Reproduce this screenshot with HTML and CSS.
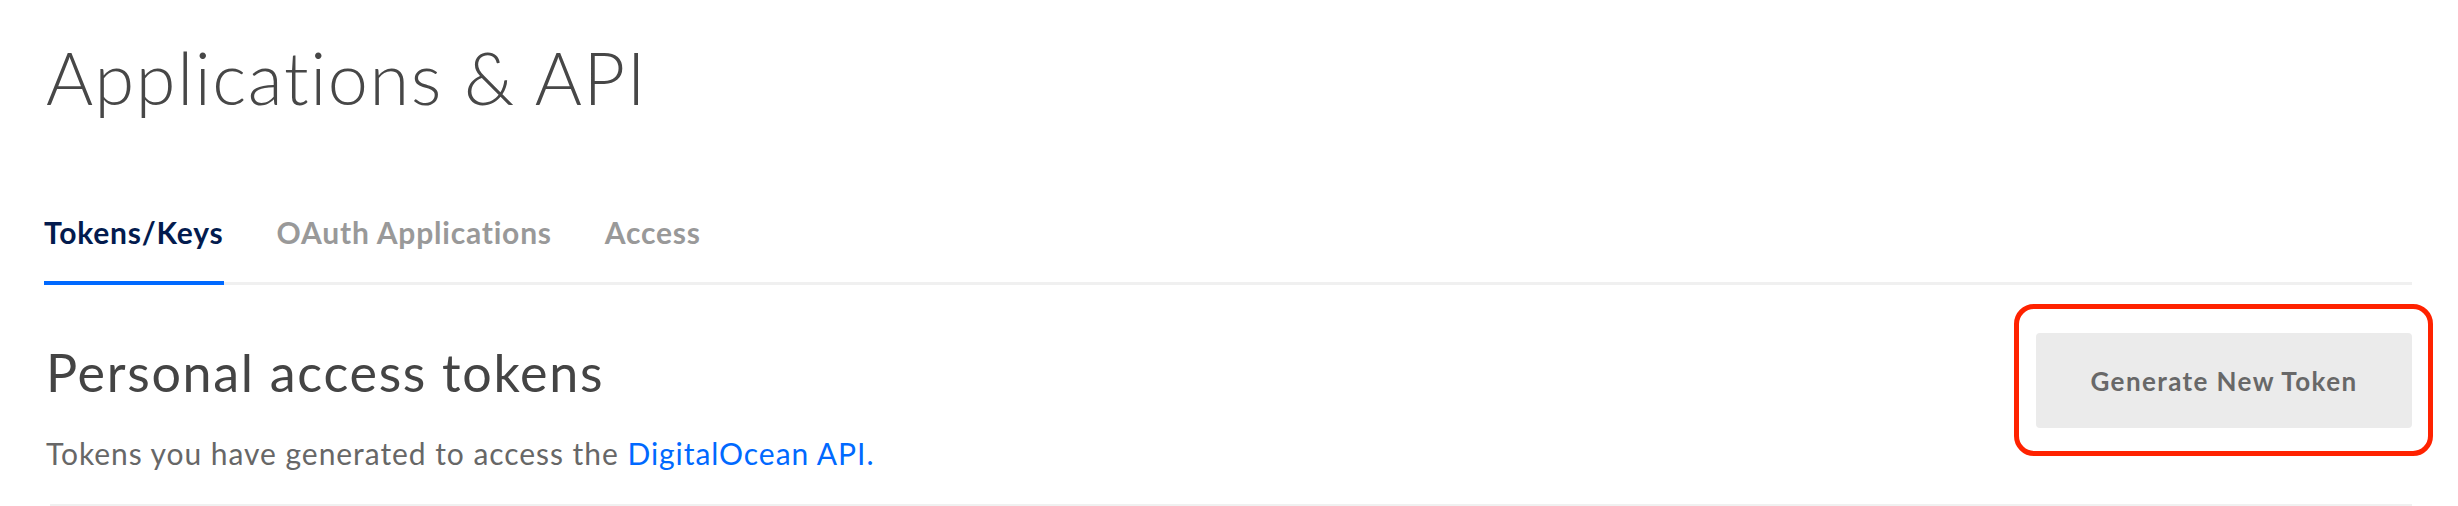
FILE: index.html
```html
<!DOCTYPE html>
<html>
<head>
    <meta charset="utf-8">
    <title>Applications &amp; API</title>
    <link rel="stylesheet" href="styles.css">
</head>
<body>
    <div class="page">

        <h1 class="title">Applications &amp; API</h1>

        <nav class="tabs">
            <a href="#" class="tab active">Tokens/Keys</a>
            <a href="#" class="tab">OAuth Applications</a>
            <a href="#" class="tab">Access</a>
        </nav>

        <div class="section">
            <div class="intro">
                <h2 class="heading">Personal access tokens</h2>
                <p class="desc">Tokens you have generated to access the <a href="#">DigitalOcean API.</a></p>
            </div>
            <div class="highlight">
                <button class="gen-btn">Generate New Token</button>
            </div>
        </div>

        <div class="divider"></div>
    </div>
</body>
</html>
```

FILE: styles.css
```css
body,html{
    margin: 0;
    padding: 0;
    background-color: #fff;
}
.page{
    padding: 0 46px 0 44px;
    font-family: Lato, "Open Sans", sans-serif;
}
.title{
    margin: 41px 0 0 2px;
    font-size: 72px;
    line-height: 72px;
    font-weight: 300;
    letter-spacing: 1.6px;
    color: #474747;
}
.tabs{
    display: flex;
    gap: 53px;
    margin-top: 104px;
    border-bottom: 3px solid #f0f0f0;
}
.tab{
    font-size: 30px;
    line-height: 30px;
    font-weight: 700;
    letter-spacing: 0.8px;
    color: #999;
    text-decoration: none;
    padding-bottom: 34px;
    margin-bottom: -3px;
    border-bottom: 4px solid transparent;
}
.tab.active{
    color: #031b4e;
    border-bottom-color: #0069ff;
}
.section{
    display: flex;
    justify-content: space-between;
    align-items: flex-start;
}
.intro{
    padding-top: 61px;
}
.heading{
    margin: 0 0 0 2px;
    font-size: 52px;
    line-height: 52px;
    font-weight: 400;
    letter-spacing: 1.7px;
    color: #444;
}
.desc{
    margin: 40px 0 0 2px;
    font-size: 30px;
    line-height: 30px;
    letter-spacing: 0.95px;
    color: #676767;
}
.desc a{
    color: #0069ff;
    text-decoration: none;
}
.highlight{
    position: relative;
    margin-top: 48px;
}
/* red annotation ring round the button */
.highlight::after{
    content: "";
    position: absolute;
    top: -29px;
    bottom: -28px;
    left: -22px;
    right: -21px;
    border: 5px solid #ff2200;
    border-radius: 20px;
    pointer-events: none;
}
.gen-btn{
    display: block;
    width: 376px;
    height: 95px;
    border: none;
    border-radius: 4px;
    background-color: #ebebeb;
    color: #686868;
    font-family: Lato, "Open Sans", sans-serif;
    font-size: 26px;
    font-weight: 700;
    letter-spacing: 1.4px;
    cursor: pointer;
}
.divider{
    margin: 36px 0 0 6px;
    border-top: 3px solid #f0f0f0;
}
```
